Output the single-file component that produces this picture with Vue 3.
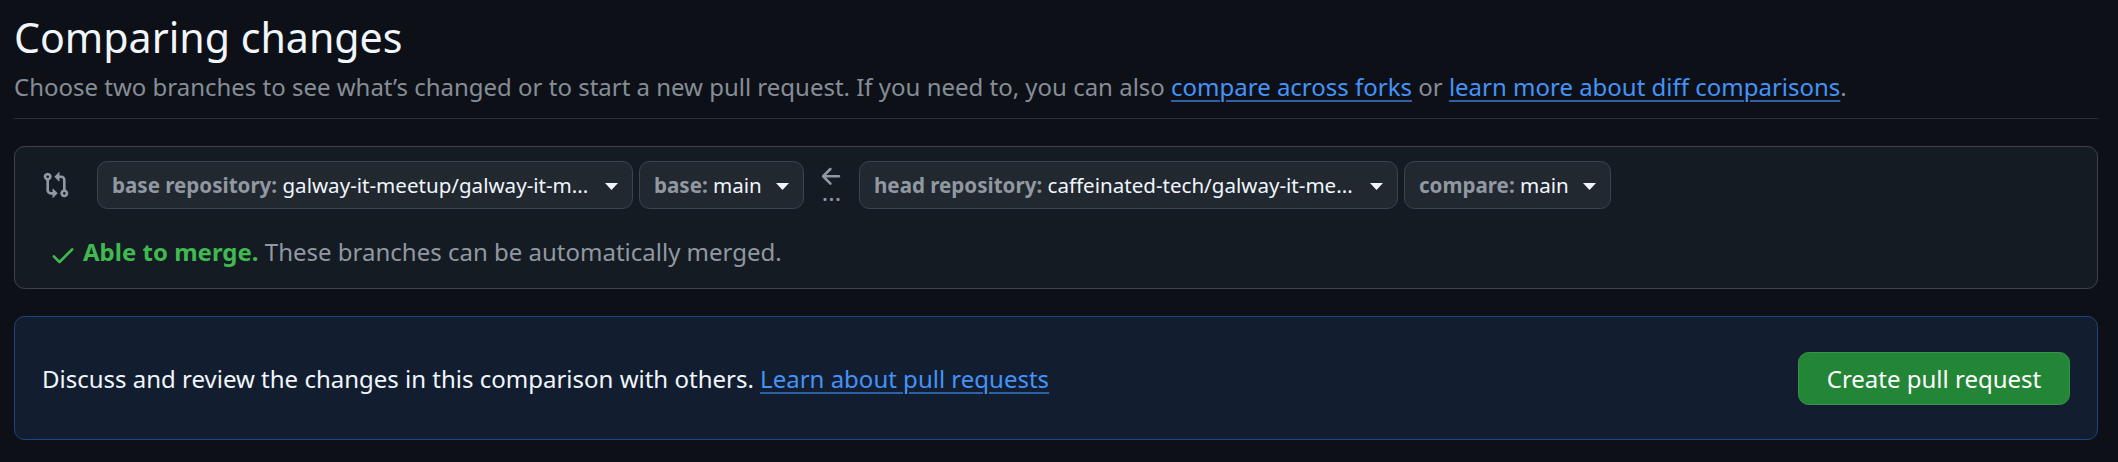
<script setup>
const base = [
  { label: 'base repository:', value: 'galway-it-meetup/galway-it-m...', cls: 'base-repo' },
  { label: 'base:', value: 'main', cls: 'base-ref' },
]
const head = [
  { label: 'head repository:', value: 'caffeinated-tech/galway-it-me...', cls: 'head-repo' },
  { label: 'compare:', value: 'main', cls: 'head-ref' },
]
</script>

<template>
  <main class="page">
    <header class="header">
      <h1>Comparing changes</h1>
      <p>Choose two branches to see what’s changed or to start a new pull request. If you need to, you can also <a>compare across forks</a> or <a>learn more about diff comparisons</a>.</p>
    </header>

    <section class="range">
      <div class="row">
        <svg class="compare" viewBox="0 0 16 16"><path d="M9.573.677A.25.25 0 0 1 10 .854V2.5h1A2.5 2.5 0 0 1 13.5 5v5.628a2.251 2.251 0 1 1-1.5 0V5a1 1 0 0 0-1-1h-1v1.646a.25.25 0 0 1-.427.177L7.177 3.427a.25.25 0 0 1 0-.354ZM6 12v-1.646a.25.25 0 0 1 .427-.177l2.396 2.396a.25.25 0 0 1 0 .354l-2.396 2.396A.25.25 0 0 1 6 15.146V13.5H5A2.5 2.5 0 0 1 2.5 11V5.372a2.25 2.25 0 1 1 1.5 0V11a1 1 0 0 0 1 1h1ZM4 3.25a.75.75 0 1 0-1.5 0 .75.75 0 0 0 1.5 0Zm8.75 8.75a.75.75 0 1 0 0 1.5.75.75 0 0 0 0-1.5Z" /></svg>
        <button v-for="s in base" :key="s.cls" class="select" :class="s.cls">
          <span><b>{{ s.label }}</b> {{ s.value }}</span><i class="caret"></i>
        </button>
        <div class="direction">
          <svg viewBox="0 0 16 16"><path d="M7.78 12.53a.75.75 0 0 1-1.06 0L2.47 8.28a.75.75 0 0 1 0-1.06l4.25-4.25a.751.751 0 0 1 1.042.018.751.751 0 0 1 .018 1.042L4.81 7h7.44a.75.75 0 0 1 0 1.5H4.81l2.97 2.97a.75.75 0 0 1 0 1.06Z" /></svg>
          <span>...</span>
        </div>
        <button v-for="s in head" :key="s.cls" class="select" :class="s.cls">
          <span><b>{{ s.label }}</b> {{ s.value }}</span><i class="caret"></i>
        </button>
      </div>
      <div class="status">
        <svg viewBox="0 0 16 16"><path d="M13.78 4.22a.75.75 0 0 1 0 1.06l-7.25 7.25a.75.75 0 0 1-1.06 0L2.22 9.28a.751.751 0 0 1 .018-1.042.751.751 0 0 1 1.042-.018L6 10.94l6.72-6.72a.75.75 0 0 1 1.06 0Z" /></svg>
        <span><strong>Able to merge.</strong> These branches can be automatically merged.</span>
      </div>
    </section>

    <section class="discuss">
      <span class="message">Discuss and review the changes in this comparison with others. <a>Learn about pull requests</a></span>
      <button class="create">Create pull request</button>
    </section>
  </main>
</template>

<style>
body {
  background: #0d1117;
}
</style>

<style scoped>
.page {
  box-sizing: border-box;
  height: 462px;
  overflow: hidden;
  padding: 0 20px 0 14px;
  background: #0d1117;
  color: #f0f6fc;
  font: 24px/36px "Noto Sans", sans-serif;
}
.header {
  box-sizing: border-box;
  height: 119px;
  padding-top: 6px;
  border-bottom: 1px solid #2b3038;
}
h1 {
  margin: 0;
  font-size: 41.14px;
  font-weight: 400;
  line-height: 62px;
}
p {
  margin: 1px 0 0;
  color: #868d96;
  font-size: 23.99px;
  white-space: nowrap;
}
a {
  color: #4493f8;
  text-decoration: underline;
  text-decoration-color: #2d62a8;
  text-decoration-thickness: 2px;
  text-underline-offset: 4px;
}
svg {
  display: block;
  flex: none;
  width: 28px;
  height: 28px;
  fill: currentColor;
}
button {
  box-sizing: border-box;
  display: flex;
  align-items: center;
  border: 1px solid #3d444d;
  border-radius: 10.5px;
  font-family: inherit;
  white-space: nowrap;
}
.range {
  box-sizing: border-box;
  height: 143px;
  margin-top: 27px;
  padding: 14px 27px;
  border: 1px solid #3d444d;
  border-radius: 10.5px;
  background: #151b23;
}
.row {
  display: flex;
  align-items: center;
  height: 48px;
  color: #9198a1;
}
.compare {
  margin-right: 27px;
}
.select {
  justify-content: space-between;
  height: 48px;
  padding: 0 14px;
  background: #212830;
  color: #f0f6fc;
  font-size: 20.57px;
}
.select b {
  color: #9198a1;
  font-weight: 700;
}
.base-repo {
  width: 536px;
}
.base-ref {
  width: 165px;
  margin-left: 6px;
}
.head-repo {
  width: 539px;
}
.head-ref {
  width: 207px;
  margin-left: 6px;
}
.caret {
  width: 13px;
  height: 7px;
  margin-top: 3px;
  background: #f0f6fc;
  clip-path: polygon(0 0, 100% 0, 50% 100%);
}
.direction {
  width: 55px;
  display: flex;
  flex-direction: column;
  align-items: center;
  margin-bottom: 6px;
}
.direction svg {
  width: 27.4px;
  height: 27.4px;
}
.direction span {
  height: 18px;
  margin-top: -8px;
  font-size: 24px;
  line-height: 18px;
}
.status {
  display: flex;
  align-items: center;
  gap: 6px;
  margin: 25px 0 0 7px;
  color: #9198a1;
}
.status svg {
  margin-top: 5px;
}
.status svg,
strong {
  color: #3fb950;
}
strong {
  font-weight: 700;
}
.discuss {
  box-sizing: border-box;
  display: flex;
  align-items: center;
  justify-content: space-between;
  height: 124px;
  margin-top: 27px;
  padding: 0 27px;
  border: 1px solid #1f4680;
  border-radius: 10.5px;
  background: #121d2f;
}
.message {
  padding-top: 2px;
}
.create {
  justify-content: center;
  width: 272px;
  height: 53px;
  border-color: #39914a;
  background: #238636;
  color: #fff;
  font-size: 24px;
}
</style>
